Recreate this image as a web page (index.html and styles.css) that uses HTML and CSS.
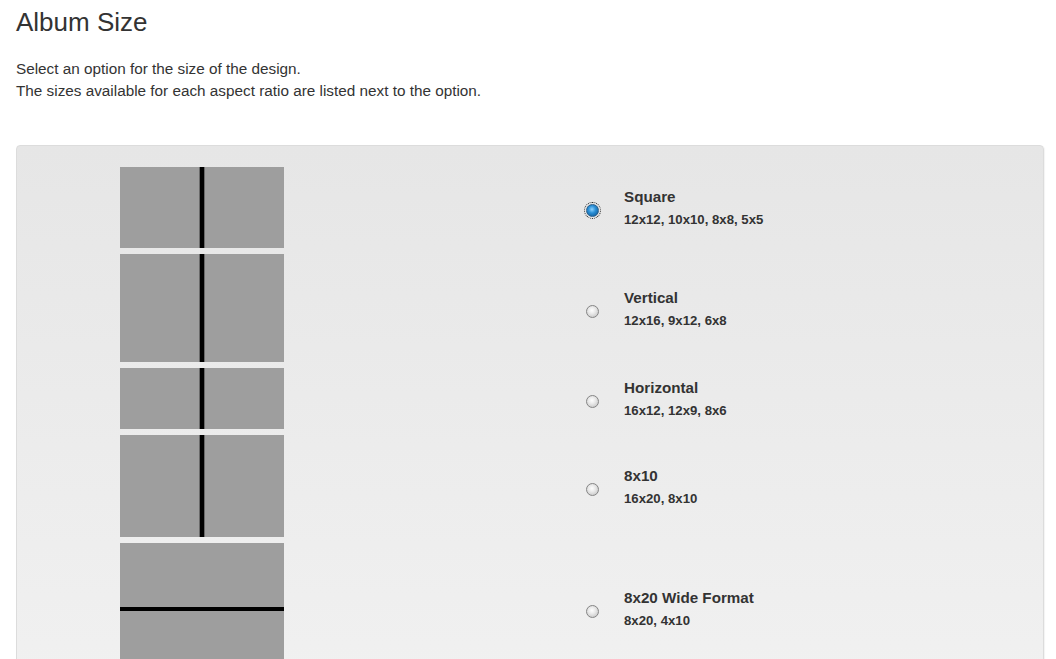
FILE: index.html
```html
<!DOCTYPE html>
<html>
<head>
<meta charset="utf-8">
<link rel="stylesheet" href="styles.css">
</head>
<body>
<div class="page">
  <h1 class="title">Album Size</h1>
  <p class="intro">Select an option for the size of the design.<br>The sizes available for each aspect ratio are listed next to the option.</p>
  <div class="panel">
    <div class="row">
      <div class="thumb split-v h-square"></div>
      <label class="option">
        <input type="radio" name="size" class="radio" checked>
        <span class="text"><span class="name">Square</span><span class="sizes">12x12, 10x10, 8x8, 5x5</span></span>
      </label>
    </div>
    <div class="row">
      <div class="thumb split-v h-vertical"></div>
      <label class="option">
        <input type="radio" name="size" class="radio">
        <span class="text"><span class="name">Vertical</span><span class="sizes">12x16, 9x12, 6x8</span></span>
      </label>
    </div>
    <div class="row">
      <div class="thumb split-v h-horizontal"></div>
      <label class="option">
        <input type="radio" name="size" class="radio">
        <span class="text"><span class="name">Horizontal</span><span class="sizes">16x12, 12x9, 8x6</span></span>
      </label>
    </div>
    <div class="row">
      <div class="thumb split-v h-8x10"></div>
      <label class="option">
        <input type="radio" name="size" class="radio">
        <span class="text"><span class="name">8x10</span><span class="sizes">16x20, 8x10</span></span>
      </label>
    </div>
    <div class="row">
      <div class="thumb split-h h-wide"></div>
      <label class="option">
        <input type="radio" name="size" class="radio">
        <span class="text"><span class="name">8x20 Wide Format</span><span class="sizes">8x20, 4x10</span></span>
      </label>
    </div>
  </div>
</div>
</body>
</html>
```

FILE: styles.css
```css
html, body {
  margin: 0;
  padding: 0;
  background: #fff;
}

body {
  font-family: "Liberation Sans", Arial, Helvetica, sans-serif;
  color: #333;
  font-size: 15px;
}

.page {
  padding: 0 12px 0 16px;
}

.title {
  margin: 8px 0 0;
  font-size: 26px;
  line-height: 1.1;
  font-weight: normal;
  color: #333;
}

.intro {
  margin: 21px 0 43px;
  font-size: 15.3px;
  line-height: 22px;
}

.panel {
  border: 1px solid #dcdcdc;
  border-radius: 4px;
  box-shadow: 1px 1px 1px rgba(0, 0, 0, 0.05);
  background: linear-gradient(to bottom, #e6e6e6 0%, #f1f1f1 100%);
  padding: 21px 0 21px 103px;
  display: flex;
  flex-direction: column;
  gap: 6px;
}

.row {
  display: flex;
  align-items: center;
}

.thumb {
  width: 164px;
  flex: none;
  background-color: #9e9e9e;
}

.split-v {
  background: linear-gradient(to right,
    #9e9e9e calc(50% - 3px), #6a6a6a calc(50% - 3px),
    #6a6a6a calc(50% - 2px), #000 calc(50% - 2px),
    #000 calc(50% + 2px), #6a6a6a calc(50% + 2px),
    #6a6a6a calc(50% + 3px), #9e9e9e calc(50% + 3px));
}

.split-h {
  background: linear-gradient(to bottom,
    #9e9e9e calc(50% - 2px), #7a7a7a calc(50% - 2px),
    #7a7a7a calc(50% - 1px), #000 calc(50% - 1px),
    #000 calc(50% + 3px), #9e9e9e calc(50% + 3px));
}

.h-square { height: 81px; }
.h-vertical { height: 108px; }
.h-horizontal { height: 61px; }
.h-8x10 { height: 102px; }
.h-wide { height: 131px; }

.option {
  display: flex;
  align-items: center;
  margin-left: 302px;
  padding-top: 7px;
  cursor: pointer;
}

.radio {
  -webkit-appearance: none;
  appearance: none;
  margin: 0;
  width: 13px;
  height: 13px;
  border-radius: 50%;
  border: 1px solid #858585;
  background: radial-gradient(circle at 45% 40%, #ffffff 0%, #e8e8e8 40%, #bcbcbc 100%);
  flex: none;
  box-sizing: border-box;
}

.radio:checked {
  border-color: #2b5f8a;
  background: radial-gradient(circle at 45% 40%, #8fd3ff 0%, #2a8fd6 40%, #0b4f8a 100%);
  outline: 1px dotted #222;
  outline-offset: 1px;
}

.text {
  display: flex;
  flex-direction: column;
  margin-left: 25px;
  margin-bottom: 6px;
  font-weight: bold;
  color: #333;
}

.name {
  font-size: 15.2px;
  line-height: 20px;
}

.sizes {
  font-size: 13.2px;
  line-height: 17px;
  margin-top: 4px;
}
```
